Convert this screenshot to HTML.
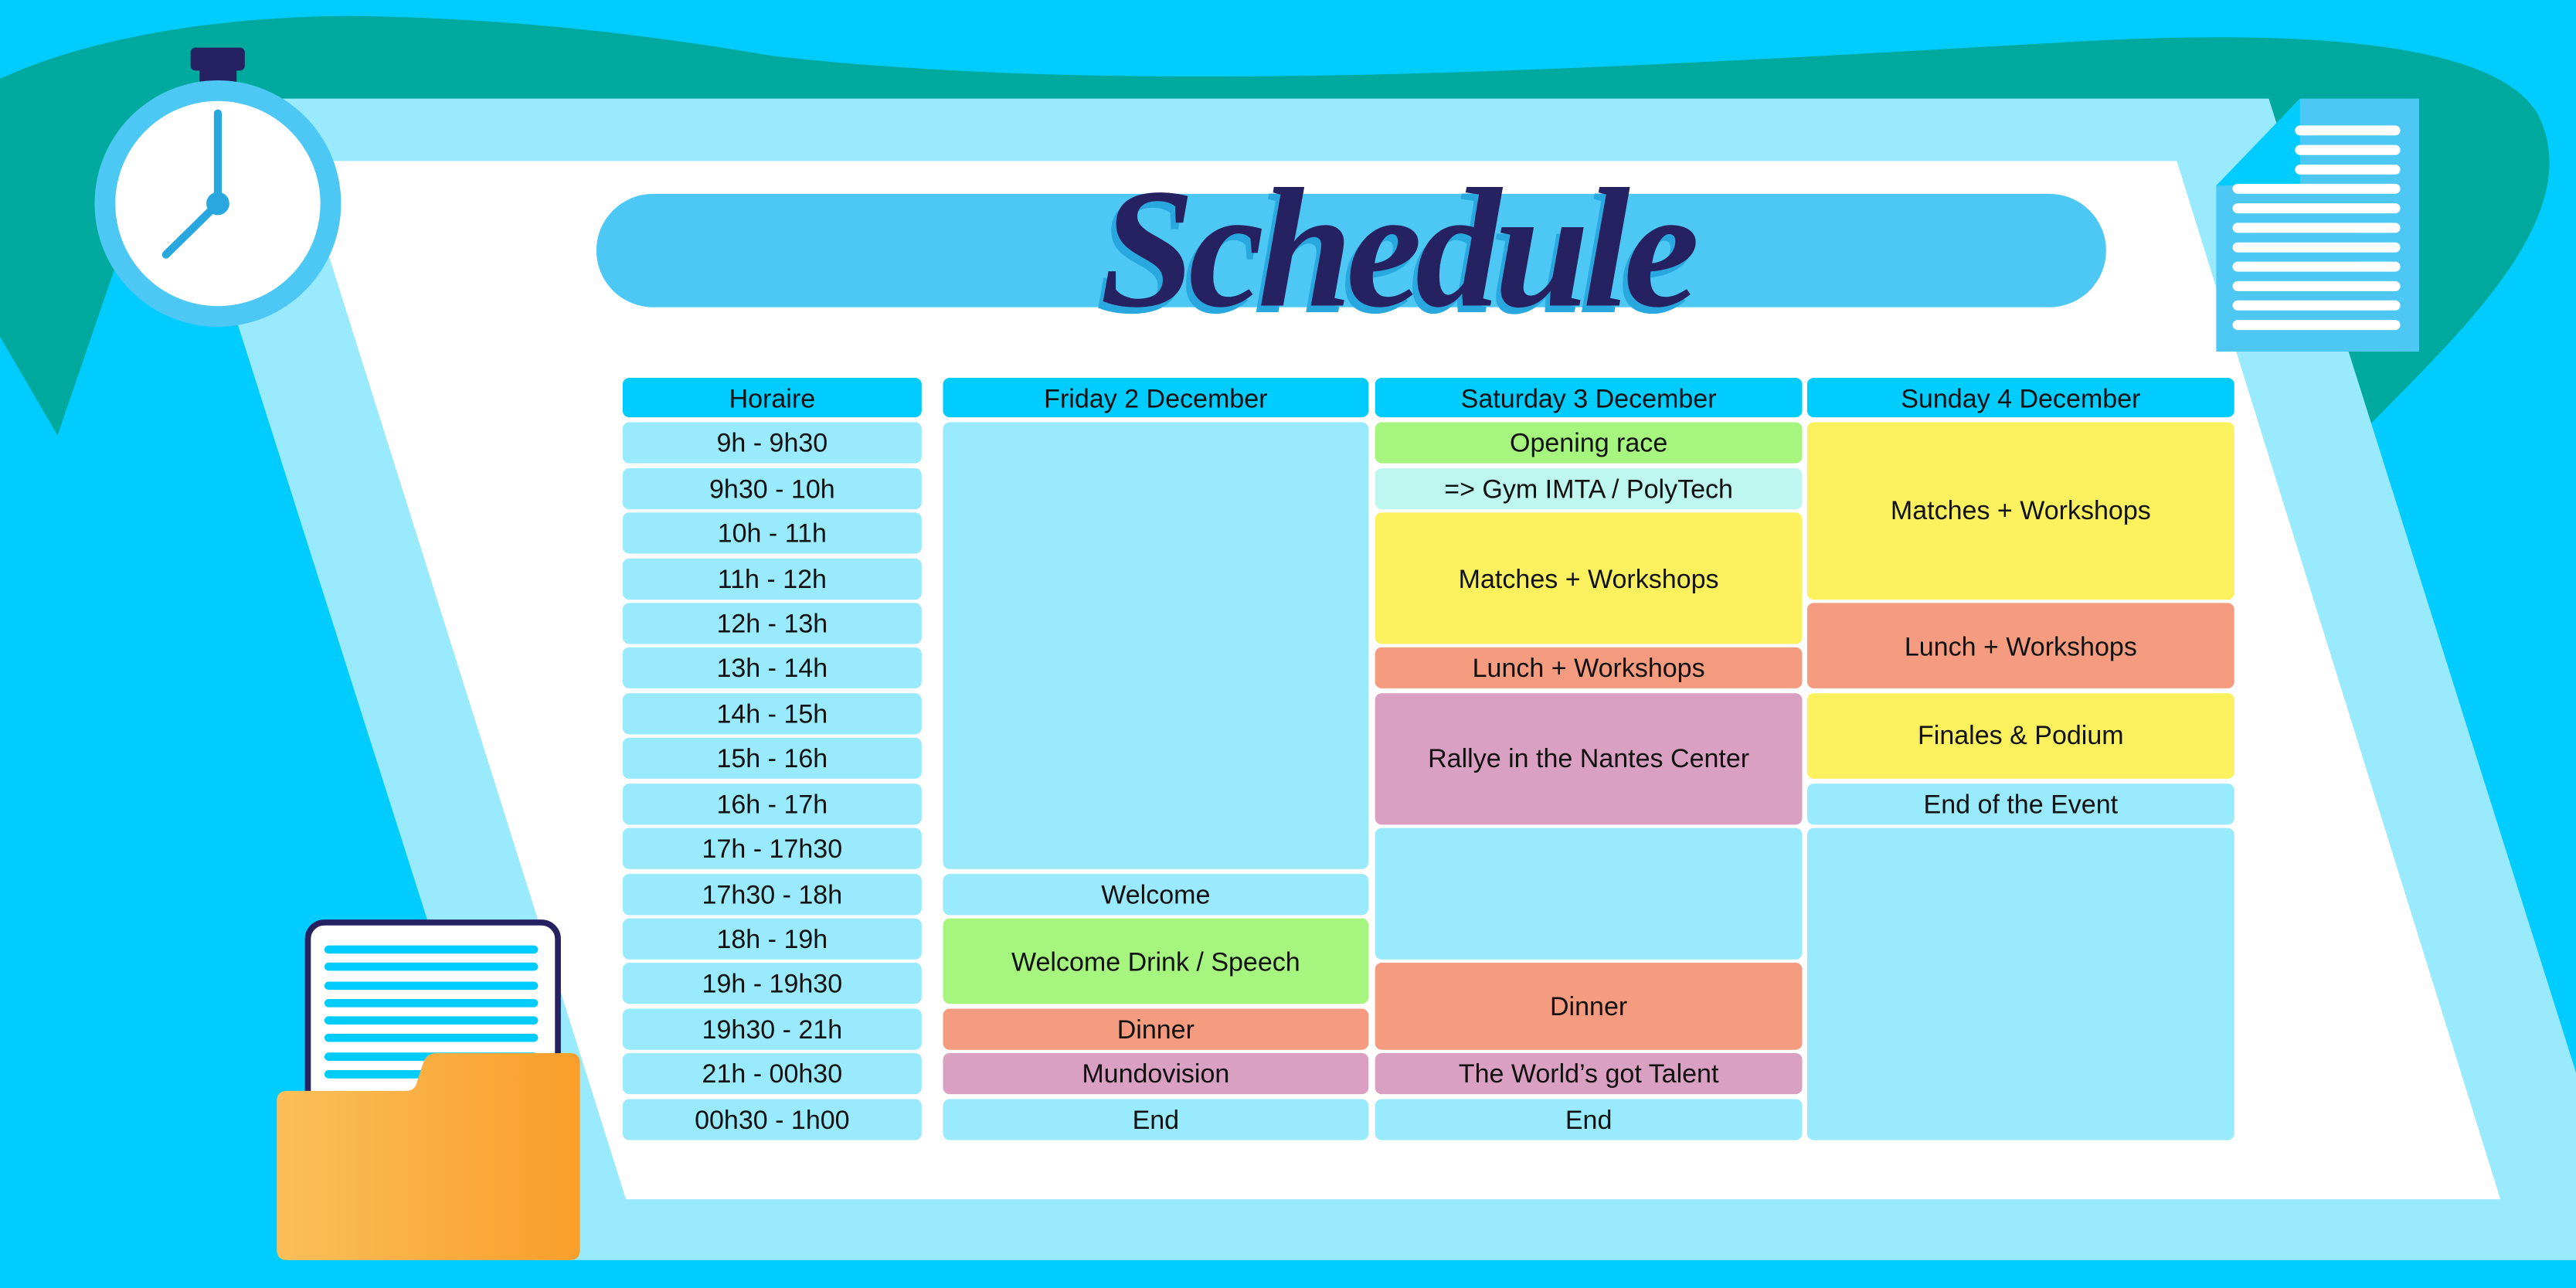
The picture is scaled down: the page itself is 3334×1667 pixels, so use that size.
<!DOCTYPE html>
<html><head><meta charset="utf-8"><style>
html,body{margin:0;padding:0;width:3334px;height:1667px;overflow:hidden;background:#00CCFF}
#w{position:absolute;left:0;top:0;width:1568px;height:784px;transform:scale(2.12628,2.12628);transform-origin:0 0}
.c{position:absolute;box-sizing:border-box;padding-top:3px;border-radius:4px;display:flex;align-items:center;justify-content:center;font-family:"Liberation Sans",sans-serif;font-size:16px;color:#111;text-align:center}
.h{background:#00CCFF}.l{background:#99EAFD}.g{background:#A6F57F}.p{background:#BDF7F0}.y{background:#FBF15E}.o{background:#F59C80}.k{background:#D9A0C2}
#title{position:absolute;left:560px;width:580px;top:92px;text-align:center;font-family:"Liberation Serif",serif;font-style:italic;font-weight:bold;font-size:104px;color:#262262;text-shadow:-3px 4px 0 #29A8E0;letter-spacing:-4px}
</style></head><body><div id="w">
<svg width="1568" height="784" style="position:absolute;left:0;top:0">
<path d="M0,48 C60,20 150,8 230,10 C320,12 400,22 470,34 C700,60 1000,40 1270,25 C1400,18 1520,25 1545,70 C1575,130 1500,200 1443,258 L1370,110 L200,110 L70,163 L35,265 L0,205 Z" fill="#00A99D"/>
<polygon points="101,60 1381,60 1604,767 326,767" fill="#99EAFD"/>
<polygon points="182,98 1325,98 1522,730 381,730" fill="#fff"/>
<rect x="363" y="118" width="919" height="69" rx="34.5" fill="#4DC8F4"/>
<rect x="116" y="29" width="33" height="14" rx="3" fill="#262262"/>
<rect x="121.5" y="40" width="22.5" height="10" fill="#262262"/>
<circle cx="132.6" cy="123.9" r="75" fill="#4DC8F4"/>
<circle cx="132.6" cy="123.9" r="62.4" fill="#fff"/>
<line x1="132.6" y1="124" x2="132.6" y2="69" stroke="#29A8E0" stroke-width="4.8" stroke-linecap="round"/>
<line x1="132.6" y1="124" x2="101" y2="155" stroke="#29A8E0" stroke-width="4.8" stroke-linecap="round"/>
<circle cx="132.6" cy="123.9" r="7" fill="#29A8E0"/>
<polygon points="1400,60 1472.5,60 1472.5,214 1349,214 1349,113" fill="#4DC8F4"/>
<polygon points="1400,60 1400,112 1349,113" fill="#00CCFF"/>
<g stroke="#fff" stroke-width="6.1" stroke-linecap="round">
<line x1="1400" y1="79.4" x2="1458" y2="79.4"/><line x1="1400" y1="91.3" x2="1458" y2="91.3"/><line x1="1400" y1="103.2" x2="1458" y2="103.2"/>
<line x1="1362" y1="114.9" x2="1458" y2="114.9"/><line x1="1362" y1="126.8" x2="1458" y2="126.8"/><line x1="1362" y1="138.7" x2="1458" y2="138.7"/><line x1="1362" y1="150.6" x2="1458" y2="150.6"/><line x1="1362" y1="162.3" x2="1458" y2="162.3"/><line x1="1362" y1="174.2" x2="1458" y2="174.2"/><line x1="1362" y1="185.9" x2="1458" y2="185.9"/><line x1="1362" y1="197.8" x2="1458" y2="197.8"/>
</g>
<rect x="187.4" y="561.5" width="152.2" height="150" rx="10" fill="#fff" stroke="#262262" stroke-width="3.6"/>
<g stroke="#00CCFF" stroke-width="5" stroke-linecap="round">
<line x1="200" y1="578" x2="325" y2="578"/><line x1="200" y1="588.4" x2="325" y2="588.4"/><line x1="200" y1="600" x2="325" y2="600"/><line x1="200" y1="610.6" x2="325" y2="610.6"/><line x1="200" y1="621.1" x2="325" y2="621.1"/><line x1="200" y1="631.7" x2="325" y2="631.7"/><line x1="200" y1="643.2" x2="325" y2="643.2"/><line x1="200" y1="653.9" x2="325" y2="653.9"/>
</g>
<defs><linearGradient id="fg" x1="0" x2="1" y1="0" y2="0"><stop offset="0" stop-color="#FBBF5A"/><stop offset="1" stop-color="#F99E2A"/></linearGradient></defs>
<path d="M175,664 L247,664 Q253,664 254,658 L258,646 Q260,641 266,641 L347,641 Q353,641 353,647 L353,761 Q353,767 347,767 L175,767 Q168.5,767 168.5,761 L168.5,670 Q168.5,664 175,664 Z" fill="url(#fg)"/>
</svg>
<div id="title">Schedule</div>

<div class="c h" style="left:379px;top:230px;width:182px;height:24px">Horaire</div>
<div class="c h" style="left:574px;top:230px;width:259px;height:24px">Friday 2 December</div>
<div class="c h" style="left:837px;top:230px;width:260px;height:24px">Saturday 3 December</div>
<div class="c h" style="left:1100px;top:230px;width:260px;height:24px">Sunday 4 December</div>

<div class="c l" style="left:379px;top:257px;width:182px;height:25px">9h - 9h30</div>
<div class="c l" style="left:379px;top:284.5px;width:182px;height:25px">9h30 - 10h</div>
<div class="c l" style="left:379px;top:312px;width:182px;height:25px">10h - 11h</div>
<div class="c l" style="left:379px;top:339.5px;width:182px;height:25px">11h - 12h</div>
<div class="c l" style="left:379px;top:367px;width:182px;height:25px">12h - 13h</div>
<div class="c l" style="left:379px;top:394.3px;width:182px;height:25px">13h - 14h</div>
<div class="c l" style="left:379px;top:421.7px;width:182px;height:25px">14h - 15h</div>
<div class="c l" style="left:379px;top:449.2px;width:182px;height:25px">15h - 16h</div>
<div class="c l" style="left:379px;top:476.6px;width:182px;height:25px">16h - 17h</div>
<div class="c l" style="left:379px;top:504px;width:182px;height:25px">17h - 17h30</div>
<div class="c l" style="left:379px;top:531.5px;width:182px;height:25px">17h30 - 18h</div>
<div class="c l" style="left:379px;top:559px;width:182px;height:25px">18h - 19h</div>
<div class="c l" style="left:379px;top:586.4px;width:182px;height:25px">19h - 19h30</div>
<div class="c l" style="left:379px;top:613.8px;width:182px;height:25px">19h30 - 21h</div>
<div class="c l" style="left:379px;top:641.3px;width:182px;height:25px">21h - 00h30</div>
<div class="c l" style="left:379px;top:668.8px;width:182px;height:25px">00h30 - 1h00</div>

<div class="c l" style="left:574px;top:257px;width:259px;height:272px"></div>
<div class="c l" style="left:574px;top:531.5px;width:259px;height:25px">Welcome</div>
<div class="c g" style="left:574px;top:559px;width:259px;height:52.4px">Welcome Drink / Speech</div>
<div class="c o" style="left:574px;top:613.8px;width:259px;height:25px">Dinner</div>
<div class="c k" style="left:574px;top:641.3px;width:259px;height:25px">Mundovision</div>
<div class="c l" style="left:574px;top:668.8px;width:259px;height:25px">End</div>

<div class="c g" style="left:837px;top:257px;width:260px;height:25px">Opening race</div>
<div class="c p" style="left:837px;top:284.5px;width:260px;height:25px">=&gt; Gym IMTA / PolyTech</div>
<div class="c y" style="left:837px;top:312px;width:260px;height:80px">Matches + Workshops</div>
<div class="c o" style="left:837px;top:394.3px;width:260px;height:25px">Lunch + Workshops</div>
<div class="c k" style="left:837px;top:421.7px;width:260px;height:80px">Rallye in the Nantes Center</div>
<div class="c l" style="left:837px;top:504px;width:260px;height:80px"></div>
<div class="c o" style="left:837px;top:586.4px;width:260px;height:52.4px">Dinner</div>
<div class="c k" style="left:837px;top:641.3px;width:260px;height:25px">The World’s got Talent</div>
<div class="c l" style="left:837px;top:668.8px;width:260px;height:25px">End</div>

<div class="c y" style="left:1100px;top:257px;width:260px;height:107.5px">Matches + Workshops</div>
<div class="c o" style="left:1100px;top:367px;width:260px;height:52.3px">Lunch + Workshops</div>
<div class="c y" style="left:1100px;top:421.7px;width:260px;height:52.5px">Finales &amp; Podium</div>
<div class="c l" style="left:1100px;top:476.6px;width:260px;height:25px">End of the Event</div>
<div class="c l" style="left:1100px;top:504px;width:260px;height:189.8px"></div>
</div></body></html>
